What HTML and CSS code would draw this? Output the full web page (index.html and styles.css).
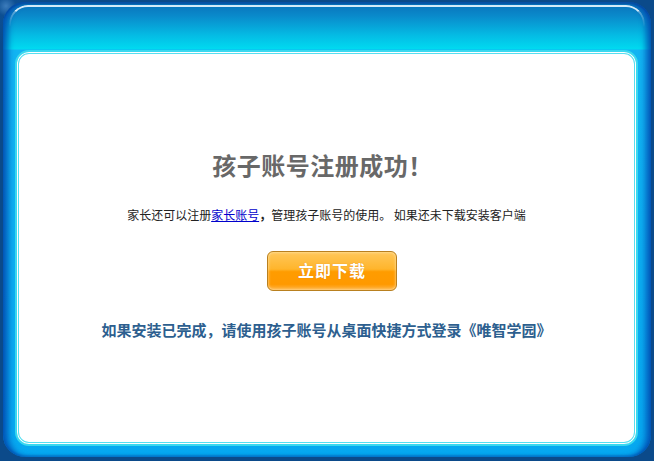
FILE: index.html
```html
<!DOCTYPE html>
<html lang="zh-CN">
<head>
<meta charset="utf-8">
<title>孩子账号注册成功</title>
<link rel="stylesheet" href="styles.css">
</head>
<body>
<div class="frame">
  <div class="panel">
    <h1 class="title">孩子账号注册成功！</h1>
    <p class="info">家长还可以注册<a class="link" href="#">家长账号</a><b class="comma">，</b>管理孩子账号的使用。 如果还未下载安装客户端</p>
    <a class="btn" href="#">立即下载</a>
    <p class="note">如果安装已完成，请使用孩子账号从桌面快捷方式登录《唯智学园》</p>
  </div>
</div>
</body>
</html>
```
FILE: styles.css
```css
html, body {
  margin: 0;
  padding: 0;
}
body {
  width: 654px;
  height: 461px;
  overflow: hidden;
  background: radial-gradient(circle at 6px 6px, #3c7cbc 0, #0d4f92 10px, #0b4a8a 40px);
  font-family: "Noto Sans CJK SC", "Noto Sans", sans-serif;
}
.frame {
  position: relative;
  box-sizing: border-box;
  width: 648px;
  height: 455px;
  margin: 2px 3px;
  border-radius: 22px;
  padding: 48px 13px 11px 12px;
  display: flex;
  background: linear-gradient(to bottom, #0a70b9 0, #0a8acb 14px, #04bde5 34px, #00daf0 47px, #12b4f2 48px, #06a8f0 100%);
  box-shadow: inset 8px 0 6px -3px rgba(0, 65, 170, 0.8), inset -8px 0 6px -3px rgba(0, 65, 170, 0.8), inset 0 -2px 2px rgba(0, 80, 170, 0.4), inset 0 2px 1px rgba(10, 70, 150, 0.6);
}
.frame::before {
  content: "";
  position: absolute;
  top: 3px;
  left: 6px;
  right: 6px;
  height: 22px;
  box-sizing: border-box;
  border-top: 2px solid rgba(235, 248, 255, 0.9);
  border-left: 2px solid rgba(255, 255, 255, 0.35);
  border-right: 2px solid rgba(255, 255, 255, 0.35);
  border-radius: 19px 19px 0 0;
  -webkit-mask-image: linear-gradient(to bottom, #000 30%, transparent 100%);
  mask-image: linear-gradient(to bottom, #000 30%, transparent 100%);
}
.panel {
  flex: 1;
  box-sizing: border-box;
  background: #fff;
  border: 2px solid #3ad8ef;
  border-radius: 14px;
  box-shadow: inset 0 0 0 1px #ffffff, inset 0 0 0 2px #55dff1;
  display: flex;
  flex-direction: column;
  align-items: center;
  padding-top: 98px;
}
.title {
  margin: 0 8px 0 0;
  font-size: 24px;
  line-height: 30px;
  font-weight: bold;
  color: #686868;
  letter-spacing: 0.5px;
}
.info {
  margin: 27px 0 0;
  font-size: 12px;
  line-height: 16px;
  color: #222222;
}
.link {
  color: #0000cc;
  text-decoration: underline;
}
.comma {
  font-weight: bold;
}
.btn {
  margin: 28px 0 0 11px;
  box-sizing: border-box;
  width: 130px;
  height: 40px;
  border: 1px solid #b9801f;
  border-radius: 6px;
  background: linear-gradient(to bottom, #ffc75a 0, #ffb52c 45%, #ff9c00 52%, #ff9900 85%, #ffb548 100%);
  box-shadow: inset 0 0 3px rgba(255, 240, 200, 0.9);
  color: #ffffff;
  font-size: 16px;
  font-weight: bold;
  line-height: 37px;
  text-align: center;
  text-decoration: none;
  letter-spacing: 1px;
  text-shadow: 0 0 1px rgba(180, 90, 0, 0.5);
}
.note {
  margin: 29px 0 0;
  font-size: 15px;
  line-height: 20px;
  font-weight: bold;
  color: #2d5f8f;
}
```
